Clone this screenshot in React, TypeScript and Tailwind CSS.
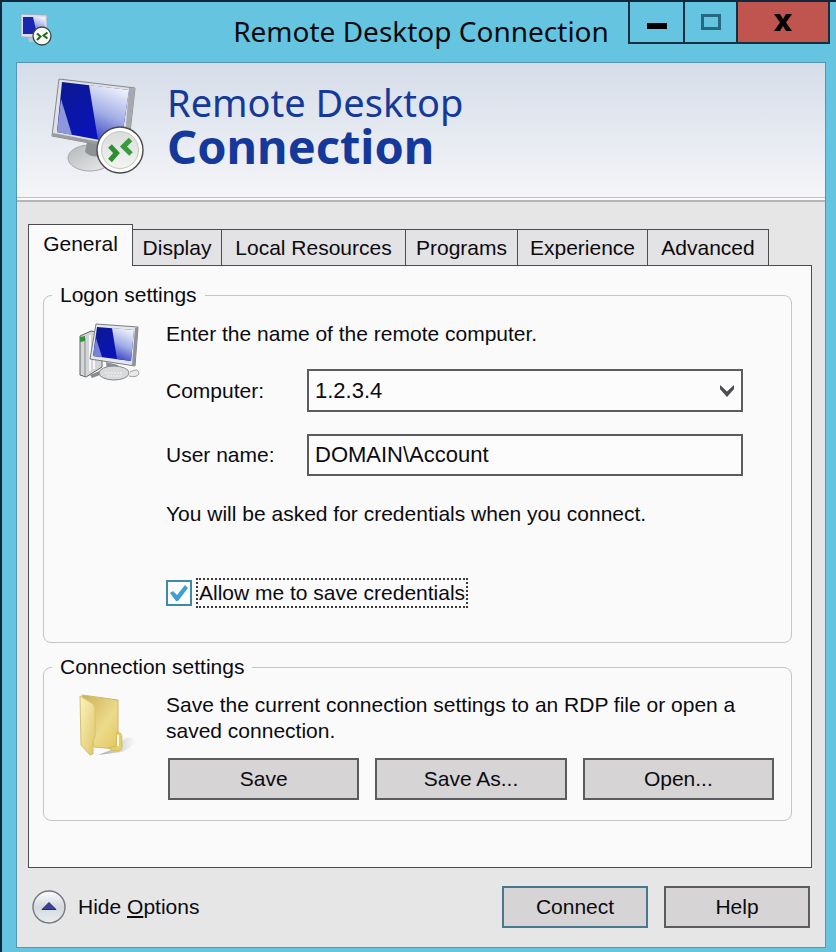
import React, { useState } from "react";

const TABS = [
  { label: "General", width: "w-[105px]" },
  { label: "Display", width: "w-[89px]" },
  { label: "Local Resources", width: "w-[184px]" },
  { label: "Programs", width: "w-[112px]" },
  { label: "Experience", width: "w-[130px]" },
  { label: "Advanced", width: "w-[121px]" },
];

const Gradients: React.FC = () => (
  <defs>
    <linearGradient id="rdp-screen" x1="0" y1="0" x2="1" y2="1">
      <stop offset="0" stopColor="#0a1a8e" />
      <stop offset="1" stopColor="#0a0fd0" />
    </linearGradient>
    <linearGradient id="rdp-glare" x1="0.6" y1="0" x2="0.3" y2="1">
      <stop offset="0" stopColor="#eef1fb" />
      <stop offset="0.5" stopColor="#a3aee6" />
      <stop offset="1" stopColor="#3540c6" />
    </linearGradient>
    <linearGradient id="rdp-base" x1="0" y1="0" x2="1" y2="1">
      <stop offset="0" stopColor="#b4b6b8" />
      <stop offset="1" stopColor="#ededee" />
    </linearGradient>
    <linearGradient id="rdp-disc" x1="0" y1="0" x2="0" y2="1">
      <stop offset="0" stopColor="#d9dcd9" />
      <stop offset="1" stopColor="#f3f5f3" />
    </linearGradient>
  </defs>
);

const RemoteIcon: React.FC = () => (
  <svg viewBox="0 0 94 98" className="h-[98px] w-[94px]" aria-hidden="true">
    <Gradients />
    <ellipse cx="39" cy="80" rx="22" ry="13" fill="url(#rdp-base)" stroke="#a5a7a9" />
    <path d="M36 64 L52 68 L50 78 Q40 80 34 74 Z" fill="#8f9295" />
    <path d="M8 1 L84 10 L77 72 L1 58 Z" fill="#dfe1e4" stroke="#85878a" />
    <path d="M78 10 L84 10 L77 72 L73 71 Z" fill="#a6a9ad" />
    <path d="M1 58 L75 72 L76 69 L2 55 Z" fill="#9a9da0" />
    <path d="M11 4 L78 12 L70 66 L6 54 Z" fill="url(#rdp-screen)" />
    <path d="M38 7 L78 12 L70 66 L47 62 Z" fill="url(#rdp-glare)" />
    <path d="M10 21 L21 57 L6 54 Z" fill="#8d97dc" />
    <g transform="translate(69 72)">
      <circle r="23" fill="#fdfdfd" stroke="#4a4a4a" strokeWidth="1.4" />
      <circle r="18.5" fill="url(#rdp-disc)" stroke="#c3c7c3" strokeWidth="1" />
      <path
        d="M-10 -4 L-3.500 3 L-10 10.500"
        fill="none"
        stroke="#2f8f35"
        strokeWidth="5"
      />
      <path
        d="M10.500 -10.500 L3.500 -3.500 L11 4"
        fill="none"
        stroke="#3a9a3e"
        strokeWidth="5"
      />
    </g>
  </svg>
);

const TitleIcon: React.FC = () => (
  <svg viewBox="0 0 32 34" className="mt-[11px] ml-1 h-[34px] w-8" aria-hidden="true">
    <path d="M8 24 L18 24 L18 29 L9 29 Z" fill="#b9c6d2" />
    <path d="M1 1 L27 2 V25 L1 24 Z" fill="#d9dcea" stroke="#8fa6bd" strokeWidth="0.8" />
    <path d="M3 4 L25 4 V21 L3 21 Z" fill="#1a26b0" />
    <path d="M13 4 H25 V21 L17 21 Z" fill="url(#rdp-glare)" />
    <circle cx="22" cy="23" r="9" fill="#f7fbf4" stroke="#3b474a" strokeWidth="1.3" />
    <path d="M17 20.500 L20.500 23.500 L17 27" fill="none" stroke="#1d6a1f" strokeWidth="2" />
    <path d="M27.500 19.500 L23.500 22.500 L27.500 25.500" fill="none" stroke="#1d6a1f" strokeWidth="2" />
  </svg>
);

const ComputerIcon: React.FC = () => (
  <svg viewBox="0 0 64 58" className="h-[58px] w-16" aria-hidden="true">
    <path d="M2 13 L13 8 L24 10 V44 L8 54 L2 52 Z" fill="#d3d5d6" stroke="#606366" />
    <path d="M7 15 V53" stroke="#898c8e" strokeWidth="1" />
    <path d="M12 12 V48 M16 12 V46" stroke="#f6f6f6" strokeWidth="2" />
    <path d="M2 14 L7 13 V18 L2 19 Z" fill="#2c9338" />
    <path d="M12 52 L26 46 L30 49 L14 55 Z" fill="#8a8c8f" />
    <path d="M28 39 L40 42 L39 49 L29 48 Z" fill="#8b8e92" />
    <ellipse cx="36" cy="50" rx="15" ry="7" fill="#d8d9db" stroke="#85888b" />
    <path d="M27 50 H44 M29 53 H43" stroke="#f5f5f5" strokeDasharray="2 1" />
    <path d="M52 49 Q61 44 61 51 Q58 55 51 53" fill="#e9e9ea" stroke="#a0a2a4" />
    <path d="M18 1 L60 4 L57 43 L12 36 Z" fill="#e5e7ea" stroke="#7a7d80" />
    <path d="M57 5 L60 4 L57 43 L54 42 Z" fill="#8f9296" />
    <path d="M19 4 L56 7 L53 38 L15 33 Z" fill="url(#rdp-screen)" />
    <path d="M34 5 L56 7 L53 38 L39 36 Z" fill="url(#rdp-glare)" />
    <path d="M18 15 L24 34 L15 33 Z" fill="#7883d8" />
  </svg>
);

const FolderIcon: React.FC = () => (
  <svg viewBox="0 0 60 64" className="h-16 w-[60px]" aria-hidden="true">
    <defs>
      <linearGradient id="folder-front" x1="0" y1="0" x2="1" y2="1">
        <stop offset="0" stopColor="#fbf3c0" />
        <stop offset="1" stopColor="#dfc566" />
      </linearGradient>
      <linearGradient id="folder-back" x1="0" y1="0" x2="1" y2="1">
        <stop offset="0" stopColor="#cdb059" />
        <stop offset="0.6" stopColor="#ecdb8b" />
        <stop offset="1" stopColor="#e3c65c" />
      </linearGradient>
      <linearGradient id="folder-shadow" x1="0" y1="0" x2="1" y2="0">
        <stop offset="0" stopColor="#a9a9a9" />
        <stop offset="1" stopColor="#a9a9a9" stopOpacity="0" />
      </linearGradient>
    </defs>
    <path d="M38 54 Q48 39 57 45 Q60 50 44 58 L20 61 Z" fill="url(#folder-shadow)" />
    <path d="M4 1 L40 6 V55 L16 53 Z" fill="url(#folder-back)" stroke="#cfb968" />
    <path
      d="M39 38 Q44 38 44 44 V54 Q42 59 34 56 L30 54 L38 52 Z"
      fill="#e6ce6b"
      stroke="#cdb04e"
      strokeWidth="0.7"
    />
    <path d="M40 41 V52" stroke="#fffdf2" strokeWidth="2" />
    <path
      d="M2 2 L14 9 Q18 12 17 18 V42 L15 47 V60 L12 61 L3 51 Z"
      fill="url(#folder-front)"
      stroke="#d6c172"
    />
  </svg>
);

const buttonBase = "h-[42px] border-2 bg-[#d6d4d5]";

const App: React.FC = () => {
  const [activeTab, setActiveTab] = useState("General");
  const [computer, setComputer] = useState("1.2.3.4");
  const [userName, setUserName] = useState("DOMAIN\\Account");
  const [saveCredentials, setSaveCredentials] = useState(true);

  return (
    <div className="flex min-h-screen flex-col border-t-2 border-l-2 border-[#10283c] bg-[#65c5e1] pr-[10px] pb-[5px] pl-[14px] font-['Liberation_Sans',Arial,sans-serif] text-[21px] leading-6 text-[#0b0b0f]">
      {/* Title bar */}
      <header className="grid h-[60px] grid-cols-[1fr_auto_1fr] items-start">
        <TitleIcon />
        <h1 className="pt-[10px] font-['Noto_Sans','Open_Sans',sans-serif] text-[28px] leading-[38px]">
          Remote Desktop Connection
        </h1>
        <div className="-mr-1 flex h-[42px] justify-self-end border-x-2 border-b-2 border-[#14303f]">
          <button
            type="button"
            aria-label="Minimize"
            className="flex w-[55px] items-center justify-center border-r-2 border-[#14303f]"
          >
            <svg viewBox="0 0 20 6" className="mt-2 h-[6px] w-5">
              <rect width="20" height="6" fill="#000" />
            </svg>
          </button>
          <button
            type="button"
            aria-label="Maximize"
            className="flex w-[53px] items-center justify-center border-r-2 border-[#14303f]"
          >
            <svg viewBox="0 0 20 16" className="h-4 w-5">
              <rect
                x="1.5"
                y="1.5"
                width="17"
                height="13"
                fill="none"
                stroke="#256883"
                strokeWidth="3"
              />
            </svg>
          </button>
          <button
            type="button"
            aria-label="Close"
            className="flex w-[90px] items-center justify-center bg-[#c0544f]"
          >
            <svg viewBox="0 0 18 17" className="h-[17px] w-[18px]">
              <path
                d="M0 0 H6 L9 5 L12 0 H18 L12 8.5 L18 17 H12 L9 12 L6 17 H0 L6 8.5 Z"
                fill="#000"
              />
            </svg>
          </button>
        </div>
      </header>

      <main className="flex flex-1 flex-col border border-[#5596b5] bg-[#e7e6e7]">
        {/* Banner */}
        <div className="flex h-[135px] items-start border-b border-[#bfc1c4] bg-linear-to-b from-[#d5dde9] to-[#f5f5f8] pt-[15px] pl-[34px]">
          <RemoteIcon />
          <div className="ml-[22px] pt-[2px] font-['Noto_Sans','Open_Sans',sans-serif] text-[#14399a]">
            <p className="text-[38px] leading-[44px]">Remote Desktop</p>
            <p className="text-[47px] leading-[44px] font-bold">Connection</p>
          </div>
        </div>
        <div className="h-1 border-b-2 border-[#b4b5b7] bg-[#fbfbfc]" />

        {/* Tabs */}
        <div className="flex items-end pt-[22px] pl-[11px]" role="tablist">
          {TABS.map(({ label, width }) => (
            <button
              key={label}
              type="button"
              role="tab"
              aria-selected={label === activeTab}
              onClick={() => setActiveTab(label)}
              className={
                label === activeTab
                  ? `${width} z-10 -mb-[1px] h-[42px] border border-b-0 border-[#4c4c50] bg-[#fafafb] pb-1`
                  : `${width} h-[36px] border-t border-r border-[#4c4c50] bg-[#e3e2e4]`
              }
            >
              {label}
            </button>
          ))}
        </div>

        <div
          role="tabpanel"
          className="mr-[13px] ml-[11px] flex-1 border border-[#4c4c50] bg-[#fafafb] pt-[13px] pr-[19px] pb-[46px] pl-[14px]"
        >
          <fieldset className="flex rounded-lg border border-[#c3c5c7] pr-[48px] pb-[34px] pl-[34px]">
            <legend className="-ml-[26px] h-8 px-2 leading-8">Logon settings</legend>
            <div className="w-[88px] shrink-0 pt-3">
              <ComputerIcon />
            </div>
            <div className="flex-1 pt-[11px]">
              <p>Enter the name of the remote computer.</p>
              <div className="mt-[23px] flex items-center">
                <label htmlFor="computer" className="w-[141px]">
                  Computer:
                </label>
                <div className="relative flex-1">
                  <select
                    id="computer"
                    value={computer}
                    onChange={(e) => setComputer(e.target.value)}
                    className="block h-[43px] w-full appearance-none border-2 border-[#5c5c60] bg-[#fcfcfd] px-[6px] text-[22px]"
                  >
                    <option>1.2.3.4</option>
                  </select>
                  <svg
                    viewBox="0 0 14 12"
                    className="pointer-events-none absolute top-4 right-[9px] h-3 w-[14px]"
                  >
                    <path d="M0 0 L7 6.5 L14 0 V4 L7 12 L0 4 Z" fill="#4c4c50" />
                  </svg>
                </div>
              </div>
              <div className="mt-[22px] flex items-center">
                <label htmlFor="user-name" className="w-[141px]">
                  User name:
                </label>
                <input
                  id="user-name"
                  type="text"
                  value={userName}
                  onChange={(e) => setUserName(e.target.value)}
                  className="h-[42px] min-w-0 flex-1 border-2 border-[#5c5c60] bg-[#fcfcfd] px-[6px] text-[22px]"
                />
              </div>
              <p className="mt-[26px]">
                You will be asked for credentials when you connect.
              </p>
              <div className="mt-[52px] flex h-[30px] items-center">
                <input
                  id="save-credentials"
                  type="checkbox"
                  checked={saveCredentials}
                  onChange={(e) => setSaveCredentials(e.target.checked)}
                  className="peer h-[26px] w-[26px] appearance-none border-2 border-[#3f8aa8] bg-white"
                />
                <svg
                  viewBox="0 0 18 16"
                  className="pointer-events-none invisible -ml-[22px] h-4 w-[18px] peer-checked:visible"
                >
                  <path d="M0 8 L3 6 L7 10 L15 0 L18 3 L8 16 H6 Z" fill="#3f9fd0" />
                </svg>
                <label
                  htmlFor="save-credentials"
                  className="ml-2 h-[30px] border-2 border-dotted border-[#3a3a3a] px-px leading-[26px]"
                >
                  Allow me to save credentials
                </label>
              </div>
            </div>
          </fieldset>

          <fieldset className="mt-2 flex rounded-lg border border-[#c3c5c7] pr-[17px] pb-5 pl-[34px]">
            <legend className="-ml-[26px] h-8 px-2 leading-8">
              Connection settings
            </legend>
            <div className="w-[88px] shrink-0 pt-[11px]">
              <FolderIcon />
            </div>
            <div className="flex-1 pt-[9px]">
              <p className="leading-[26px]">
                Save the current connection settings to an RDP file or open a
                saved connection.
              </p>
              <div className="mt-[14px] grid grid-cols-3 gap-4 pl-[2px]">
                <button type="button" className={`${buttonBase} border-[#5c5c60]`}>
                  Save
                </button>
                <button type="button" className={`${buttonBase} border-[#5c5c60]`}>
                  Save As...
                </button>
                <button type="button" className={`${buttonBase} border-[#5c5c60]`}>
                  Open...
                </button>
              </div>
            </div>
          </fieldset>
        </div>

        {/* Footer */}
        <footer className="flex items-center pt-[18px] pr-[15px] pb-[19px] pl-[15px]">
          <button type="button" className="flex items-center gap-3">
            <svg viewBox="0 0 34 34" className="h-[34px] w-[34px]" aria-hidden="true">
              <defs>
                <linearGradient id="toggle-disc" x1="0" y1="0" x2="0" y2="1">
                  <stop offset="0" stopColor="#fdfdfe" />
                  <stop offset="0.5" stopColor="#d3d9e0" />
                  <stop offset="1" stopColor="#e8eeee" />
                </linearGradient>
              </defs>
              <circle
                cx="17"
                cy="17"
                r="16"
                fill="url(#toggle-disc)"
                stroke="#74777f"
                strokeWidth="1.4"
              />
              <path d="M17 12.500 L24 19.500 H10 Z" fill="#37439a" stroke="#26305c" />
            </svg>
            <span>
              Hide <span className="underline decoration-2 underline-offset-2">O</span>ptions
            </span>
          </button>
          <button
            type="button"
            className={`${buttonBase} ml-auto w-[146px] border-[#47788d]`}
          >
            Connect
          </button>
          <button
            type="button"
            className={`${buttonBase} ml-4 w-[146px] border-[#5c5c60]`}
          >
            Help
          </button>
        </footer>
      </main>
    </div>
  );
};

export default App;
